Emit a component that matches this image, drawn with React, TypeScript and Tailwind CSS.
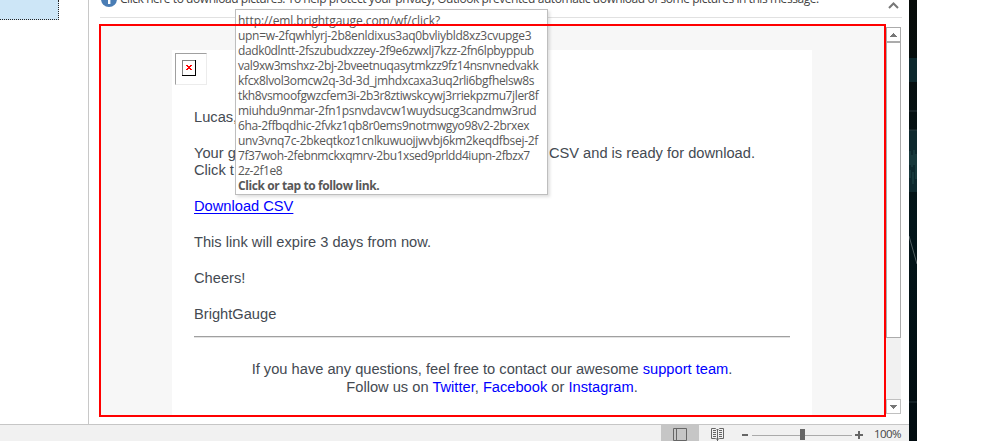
const linkLines: [string, string][] = [
  ['http://eml.brightgauge.com/wf/click?', 'tracking-[-0.08px]'],
  ['upn=w-2fqwhlyrj-2b8enldixus3aq0bvliybld8xz3cvupge3', 'tracking-[-0.31px]'],
  ['dadk0dlntt-2fszubudxzzey-2f9e6zwxlj7kzz-2fn6lpbyppub', 'tracking-[-0.38px]'],
  ['val9xw3mshxz-2bj-2bveetnuqasytmkzz9fz14nsnvnedvakk', 'tracking-[-0.41px]'],
  ['kfcx8lvol3omcw2q-3d-3d_jmhdxcaxa3uq2rli6bgfhelsw8s', 'tracking-[-0.35px]'],
  ['tkh8vsmoofgwzcfem3i-2b3r8ztiwskcywj3rriekpzmu7jler8f', 'tracking-[-0.37px]'],
  ['miuhdu9nmar-2fn1psnvdavcw1wuydsucg3candmw3rud', 'tracking-[-0.35px]'],
  ['6ha-2ffbqdhic-2fvkz1qb8r0ems9notmwgyo98v2-2brxex', 'tracking-[-0.37px]'],
  ['unv3vnq7c-2bkeqtkoz1cnlkuwuojjwvbj6km2keqdfbsej-2f', 'tracking-[-0.31px]'],
  ['7f37woh-2febnmckxqmrv-2bu1xsed9prldd4iupn-2fbzx7', 'tracking-[-0.41px]'],
  ['2z-2f1e8', 'tracking-[-0.45px]'],
];

function Tooltip() {
  return (
    <div className="absolute left-[235px] top-[9px] h-[186px] w-[313px] border border-[#bebebe] bg-white pl-[2px] pt-[3px] font-['Open_Sans','Noto_Sans',sans-serif] text-[12px] leading-[15px] whitespace-nowrap text-[#575757] shadow-[2px_2px_3px_rgba(0,0,0,0.13)]">
      {linkLines.map(([text, tracking]) => (
        <div key={text} className={tracking}>{text}</div>
      ))}
      <div className="font-bold tracking-[-0.42px]">Click or tap to follow link.</div>
    </div>
  );
}

function BrokenImage() {
  return (
    <div className="h-8 w-8 border border-t-[#a0a0a0] border-r-[#ececec] border-b-[#ececec] border-l-[#a0a0a0] pl-[6px] pt-[6px]">
      <svg width="14" height="16" viewBox="0 0 14 16" shapeRendering="crispEdges">
        <path d="M0 0h14v16H0z" fill="#000" />
        <path d="M0 0h13v15H0z" fill="#808080" />
        <path d="M1 1h12v14H1z" fill="#fff" />
        <path d="M4 5h2v1H4zM8 5h2v1H8zM5 6h2v1H5zM7 6h2v1H7zM6 7h2v1H6zM5 8h2v1H5zM7 8h2v1H7zM4 9h2v1H4zM8 9h2v1H8z" fill="#f00" />
      </svg>
    </div>
  );
}

function Message() {
  return (
    <div className="h-[365px] w-[640px] shrink-0 overflow-hidden bg-white px-[22px] pt-[3px] font-['Liberation_Sans',Arial,sans-serif] text-[14.67px] leading-[18px] whitespace-nowrap text-[#444a52]">
      <div className="-ml-[19px]"><BrokenImage /></div>
      <p className="mt-[23px]">Lucas,</p>
      <p className="mt-[18px] flex w-[561px] justify-between"><span>Your g</span><span>CSV and is ready for download.</span></p>
      <p className="-mt-px">Click t</p>
      <p className="mt-[18px]"><a className="text-[#0000ff] underline decoration-1 underline-offset-2">Download CSV</a></p>
      <p className="mt-[18px]">This link will expire 3 days from now.</p>
      <p className="mt-[18px]">Cheers!</p>
      <p className="mt-[18px]">BrightGauge</p>
      <hr className="mt-[13px] h-[2px] w-[596px] border-0 border-t border-b border-t-[#a0a0a0] border-b-[#e3e3e3]" />
      <div className="mt-[22px] text-center">
        <p>If you have any questions, feel free to contact our awesome <a className="text-[#0000ff]">support team</a>.</p>
        <p>Follow us on <a className="text-[#0000ff]">Twitter</a>, <a className="text-[#0000ff]">Facebook</a> or <a className="text-[#0000ff]">Instagram</a>.</p>
      </div>
    </div>
  );
}

function ScrollBar() {
  return (
    <div className="mt-[3px] flex h-[387px] w-[15px] shrink-0 flex-col bg-[#f1f1f1]">
      <div className="flex h-[15px] shrink-0 items-center justify-center border border-[#ababab] bg-white">
        <svg width="7" height="4" viewBox="0 0 7 4" shapeRendering="crispEdges"><path d="M3 0h1v1h1v1h1v1h1v1H0V3h1V2h1V1h1z" fill="#777" /></svg>
      </div>
      <div className="h-[296px] shrink-0 border border-[#ababab] bg-white" />
      <div className="mt-auto flex h-[15px] shrink-0 items-center justify-center border border-[#c0c0c0] bg-white">
        <svg width="7" height="4" viewBox="0 0 7 4" shapeRendering="crispEdges"><path d="M0 0h7v1H6v1H5v1H4v1H3V3H2V2H1V1H0z" fill="#777" /></svg>
      </div>
    </div>
  );
}

function StatusBar() {
  return (
    <div className="flex h-[17px] shrink-0 border-t border-[#c6c6c6] bg-[#f1f1f1]">
      <div className="ml-[661px] flex w-[38px] justify-center bg-[#c6c6c6] pt-[3px]">
        <svg width="14" height="13" viewBox="0 0 14 13" fill="none" stroke="#666"><path d="M.5.5h13v12H.5zM3.5 0v13" /></svg>
      </div>
      <svg className="ml-3 mt-[3px] shrink-0" width="13" height="13" viewBox="0 0 13 13" fill="none" stroke="#666">
        <path d="M5.5 1.5 4.5.5h-4v10h4l2 1 2-1h4V.5h-4l-1 1M6.5 1v12M2 2.5h3M2 4.5h3M2 6.5h3M2 8.5h3M8 2.5h3M8 4.5h3M8 6.5h3M8 8.5h3" />
      </svg>
      <svg className="ml-[18px] shrink-0" width="121" height="16" viewBox="0 0 121 16" shapeRendering="crispEdges" fill="#666">
        <path d="M0 9h6v2H0zM113 9h8v2h-8zM116 6h2v8h-2z" />
        <path d="M10 10h100v1H10z" fill="#aaa" />
        <path d="M58 4h5v11h-5z" />
      </svg>
      <span className="ml-[11px] mt-px font-['Open_Sans','Noto_Sans',sans-serif] text-[11.5px] leading-[15px] tracking-[-0.6px] text-[#444]">100%</span>
    </div>
  );
}

export default function App() {
  return (
    <div className="relative flex h-[441px] w-[985px] overflow-hidden bg-white">
      <div className="flex w-[909px] shrink-0 flex-col">
        <div className="flex h-[424px]">
          <div className="w-[89px] shrink-0 border-r border-[#c8c8c8]">
            <div className="h-5 w-[59px] border-r border-b border-dotted border-[#222] bg-[#cde6f7]" />
          </div>
          <div className="flex min-w-0 flex-1 flex-col">
            <div className="ml-[11px] flex h-[18px] w-[802px] shrink-0 border-b border-[#e1e1e1]">
              <svg className="-mt-[9px] ml-px shrink-0" width="16" height="16" viewBox="0 0 16 16">
                <circle cx="8" cy="8" r="8" fill="#4a7db5" /><path d="M7 6.5h2.4V13H7zM7 3h2.4v2H7z" fill="#fff" />
              </svg>
              <span className="-mt-[9px] ml-[3px] font-['Open_Sans','Noto_Sans',sans-serif] text-[12px] leading-[16px] tracking-[-0.44px] whitespace-nowrap text-[#444]">Click here to download pictures. To help protect your privacy, Outlook prevented automatic download of some pictures in this message.</span>
              <svg className="ml-auto mr-[3px] mt-[2px] shrink-0" width="11" height="7" viewBox="0 0 11 7" fill="none" stroke="#777" strokeWidth="2"><path d="m1 6 4.5-4.5L10 6" /></svg>
            </div>
            <div className="ml-[10px] mt-[6px] flex">
              <div className="flex h-[393px] w-[787px] shrink-0 justify-center bg-[#f7f7f7] pt-[26px] pr-[1px]"><Message /></div>
              <ScrollBar />
            </div>
          </div>
        </div>
        <StatusBar />
      </div>
      <div className="w-2 shrink-0 bg-linear-to-b from-[#070b09] via-[#021519] to-[#010b0f]">
        <svg width="8" height="441" viewBox="0 0 8 441">
          <path d="M0 58h8v24H0zM0 130h8v62H0z" fill="#0d282d" />
          <path d="M1 151v14m2-10v12m2-17v15m2-11v25M1 170v8m3-6v12" stroke="#285050" strokeWidth=".8" />
          <path d="M0 111h8M0 130h8M0 402h8" stroke="#354448" strokeWidth=".7" />
          <path d="m0 236 8 28" stroke="#667174" strokeWidth=".8" />
        </svg>
      </div>
      <Tooltip />
      <div className="pointer-events-none absolute left-[99px] top-6 h-[393px] w-[787px] border-2 border-[#ff0000]" />
    </div>
  );
}
